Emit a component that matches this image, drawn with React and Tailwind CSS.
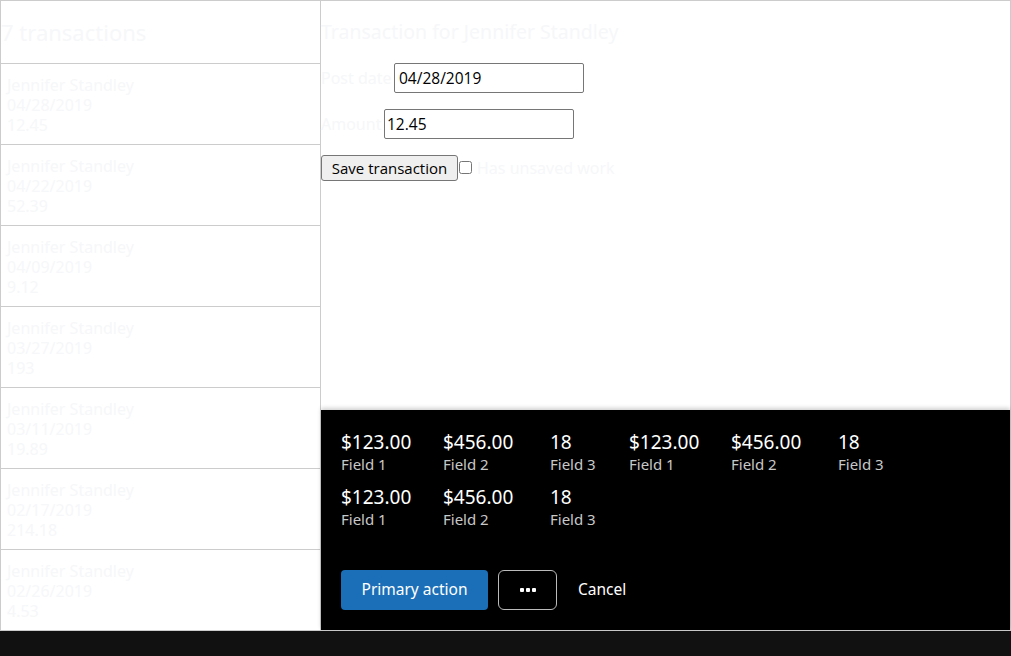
import React from "react";

const txns = [
  ["04/28/2019", "12.45"],
  ["04/22/2019", "52.39"],
  ["04/09/2019", "9.12"],
  ["03/27/2019", "193"],
  ["03/11/2019", "19.89"],
  ["02/17/2019", "214.18"],
  ["02/26/2019", "4.53"],
];

const fields = [
  ["$123.00", "Field 1", "w-[102px]"],
  ["$456.00", "Field 2", "w-[107px]"],
  ["18", "Field 3", "w-[79px]"],
  ["$123.00", "Field 1", "w-[102px]"],
  ["$456.00", "Field 2", "w-[107px]"],
  ["18", "Field 3", "w-[79px]"],
  ["$123.00", "Field 1", "w-[102px]"],
  ["$456.00", "Field 2", "w-[107px]"],
  ["18", "Field 3", "w-[79px]"],
];

export default function App() {
  return (
    <div
      className="w-[1011px] h-[656px] bg-[#111111] flex flex-col overflow-hidden"
      style={{ fontFamily: '"Noto Sans", "Open Sans", sans-serif' }}
    >
      <div className="h-[631px] border border-[#cccccc] bg-white flex">
        <div className="w-[320px] border-r border-[#cccccc] flex flex-col text-[#f6f7f9]">
          <div className="h-[63px] shrink-0 border-b border-[#cccccc] flex items-center text-[22px]">
            7 transactions
          </div>
          {txns.map(([d, a], i) => (
            <div
              key={i}
              className="h-[81px] shrink-0 border-b border-[#cccccc] last:border-b-0 px-[6px] pt-[11px] text-[16px] leading-[20px]"
            >
              <div>Jennifer Standley</div>
              <div>{d}</div>
              <div>{a}</div>
            </div>
          ))}
        </div>
        <div className="flex-1 flex flex-col">
          <div className="flex-1 flex flex-col">
            <div className="h-[62px] flex items-center text-[19.5px] text-[#f6f7f9]">
              Transaction for Jennifer Standley
            </div>
            <div className="flex items-center h-[29px]">
              <span className="text-[16px] text-[#f6f7f9] w-[73px]">Post date</span>
              <input
                readOnly
                value="04/28/2019"
                className="w-[190px] h-[30px] border border-[#767676] rounded-[2px] px-[4px] text-[15.5px] text-black outline-none"
                style={{ fontFamily: '"Open Sans", sans-serif' }}
              />
            </div>
            <div className="flex items-center h-[29px] mt-[17px]">
              <span className="text-[16px] text-[#f6f7f9] w-[63px]">Amount</span>
              <input
                readOnly
                value="12.45"
                className="w-[190px] h-[30px] border border-[#767676] rounded-[2px] px-[2px] text-[15.5px] text-black outline-none"
                style={{ fontFamily: '"Open Sans", sans-serif' }}
              />
            </div>
            <div className="flex items-center mt-[17px]">
              <button
                className="h-[26px] w-[137px] bg-[#efefef] border border-[#767676] rounded-[3px] text-[15px] text-black leading-none"
                style={{ fontFamily: '"Open Sans", sans-serif' }}
              >
                Save transaction
              </button>
              <input type="checkbox" className="ml-[1px] w-[13px] h-[13px] mt-[-2px]" />
              <span className="ml-[5px] text-[16px] text-[#f6f7f9]">Has unsaved work</span>
            </div>
          </div>
          <div className="h-[220px] bg-black shadow-[0_-2px_4px_rgba(0,0,0,0.18)] px-5 pt-5 flex flex-col">
            <div className="flex flex-wrap">
              {fields.map(([v, l, w], i) => (
                <div key={i} className={`${w} h-[55px]`}>
                  <div className="text-[19px] leading-[24px] text-white">{v}</div>
                  <div className="text-[15px] leading-[21px] text-[#c8c8c8]">{l}</div>
                </div>
              ))}
            </div>
            <div className="flex items-center mt-[30px]">
              <button className="h-[40px] w-[147px] rounded-[4px] bg-[#1b6fb8] text-white text-[15.5px]">
                Primary action
              </button>
              <button className="ml-[10px] h-[40px] w-[59px] rounded-[6px] border border-[#bbbbbb] flex items-center justify-center gap-[2px]">
                <span className="w-[4px] h-[4px] bg-white rounded-[1px]" />
                <span className="w-[4px] h-[4px] bg-white rounded-[1px]" />
                <span className="w-[4px] h-[4px] bg-white rounded-[1px]" />
              </button>
              <button className="ml-[21px] text-white text-[15.5px]">Cancel</button>
            </div>
          </div>
        </div>
      </div>
    </div>
  );
}
